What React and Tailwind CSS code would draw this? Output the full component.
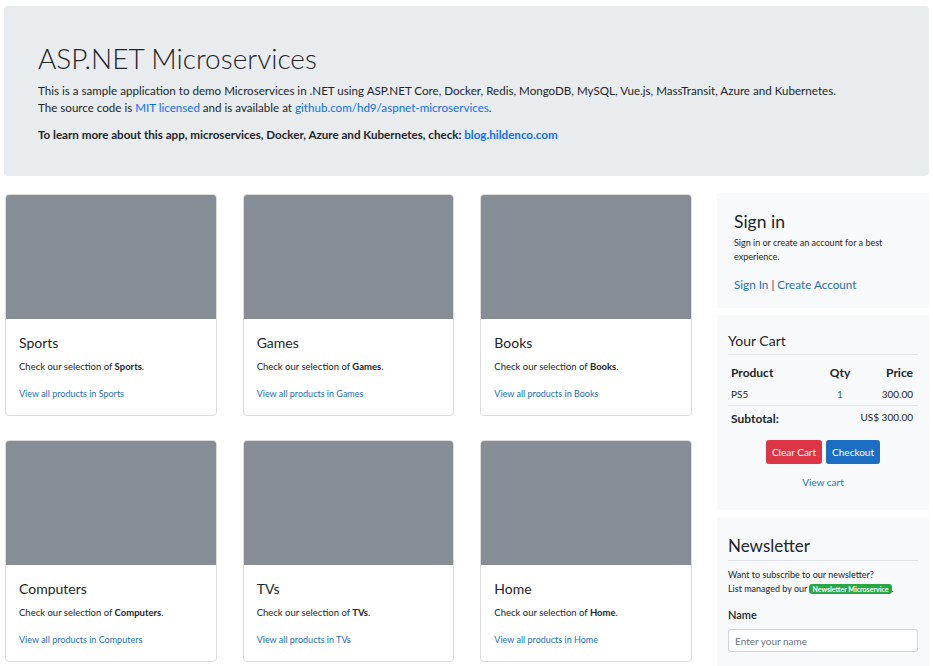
const categories = ['Sports', 'Games', 'Books', 'Computers', 'TVs', 'Home'];

function CategoryCard({ name }) {
  return (
    <div className="flex h-[222px] flex-col overflow-hidden rounded-[4px] border border-[#dcdcdc] bg-white">
      <div className="h-[124px] shrink-0 bg-[#878d94]" />
      <div className="px-[13px] pt-[14px]">
        <h5 className="text-[14px] leading-[20px] text-[#212529]">{name}</h5>
        <p className="mt-[7px] text-[9.5px] leading-[14px] text-[#212529]">
          Check our selection of <b>{name}</b>.
        </p>
        <a className="mt-[13px] block text-[9px] leading-[14px] text-[#1b6ec2]">View all products in {name}</a>
      </div>
    </div>
  );
}

export default function App() {
  return (
    <div className="min-h-[666px] bg-white px-[4px] pt-[6px] text-[#212529]" style={{ fontFamily: 'Lato, "Noto Sans", sans-serif' }}>
      <section className="rounded-[4px] bg-[#e9ecef] px-[34px] pb-[33px] pt-[34px]">
        <h1 className="text-[28px] font-light leading-[36px] text-[#212529]">ASP.NET Microservices</h1>
        <p className="mt-[6px] text-[11.6px] leading-[17px]">
          This is a sample application to demo Microservices in .NET using ASP.NET Core, Docker, Redis, MongoDB, MySQL, Vue.js, MassTransit, Azure and Kubernetes.
          <br />
          The source code is <a className="text-[#0d6efd]">MIT licensed</a> and is available at <a className="text-[#0d6efd]">github.com/hd9/aspnet-microservices</a>.
        </p>
        <p className="mt-[10px] text-[11.6px] font-bold leading-[17px]">
          To learn more about this app, microservices, Docker, Azure and Kubernetes, check: <a className="text-[#0d6efd]">blog.hildenco.com</a>
        </p>
      </section>

      <div className="mt-[17px] flex items-start">
        <div className="ml-[1px] grid w-[687px] grid-cols-3 gap-x-[26px] gap-y-[24px] pt-[1px]">
          {categories.map((c) => (
            <CategoryCard key={c} name={c} />
          ))}
        </div>

        <aside className="ml-[25px] flex w-[212px] flex-col gap-[7px]">
          <div className="h-[115px] bg-[#f8f9fa] px-[17px] pt-[16px]">
            <h4 className="text-[17.5px] leading-[26px]">Sign in</h4>
            <p className="mt-[1px] text-[9px] leading-[14px]">Sign in or create an account for a best experience.</p>
            <p className="mt-[12px] text-[11.7px] leading-[16px]">
              <a className="text-[#1b6ec2]">Sign In</a> <span className="text-[#6b2a3a]">|</span>{' '}
              <a className="text-[#1b6ec2]">Create Account</a>
            </p>
          </div>

          <div className="h-[195px] bg-[#f8f9fa] px-[11px] pt-[16px]">
            <h5 className="text-[14px] leading-[20px]">Your Cart</h5>
            <div className="mt-[3px] border-t border-[#dee2e6]" />
            <div className="grid grid-cols-[1fr_40px_53px] pl-[3px] pr-[5px] pt-[10px] text-[12px] font-bold leading-[16px]">
              <span>Product</span>
              <span className="text-center">Qty</span>
              <span className="text-right">Price</span>
            </div>
            <div className="grid grid-cols-[1fr_40px_53px] pl-[3px] pr-[5px] pt-[6px] pb-[4px] text-[10px] leading-[14px]">
              <span>PS5</span>
              <span className="text-center text-[#1b6ec2]">1</span>
              <span className="text-right">300.00</span>
            </div>
            <div className="border-t border-[#dee2e6]" />
            <div className="flex items-start justify-between pl-[3px] pr-[5px] pt-[4px]">
              <span className="text-[12px] font-bold leading-[18px]">Subtotal:</span>
              <span className="text-[10px] leading-[14px]">US$ 300.00</span>
            </div>
            <div className="mt-[12px] flex justify-center gap-[4px]">
              <button className="h-[24px] rounded-[3px] bg-[#dc3545] px-[6px] text-[10px] text-white">Clear Cart</button>
              <button className="h-[24px] rounded-[3px] bg-[#1b6ec2] px-[6px] text-[10px] text-white">Checkout</button>
            </div>
            <p className="mt-[11px] text-center text-[10px] leading-[14px]">
              <a className="text-[#1b6ec2]">View cart</a>
            </p>
          </div>

          <div className="h-[160px] bg-[#f8f9fa] px-[11px] pt-[17px]">
            <h4 className="text-[17px] leading-[24px]">Newsletter</h4>
            <div className="mt-[2px] border-t border-[#dee2e6]" />
            <p className="mt-[7px] text-[9px] leading-[14px]">
              Want to subscribe to our newsletter?
              <br />
              List managed by our{' '}
              <span className="rounded-[3px] bg-[#28a745] px-[3px] py-[1px] text-[7px] font-bold text-white">Newsletter Microservice</span>.
            </p>
            <label className="mt-[11px] block text-[11px] font-semibold leading-[16px]">Name</label>
            <input
              className="mt-[6px] h-[23px] w-full rounded-[3px] border border-[#ced4da] bg-white px-[6px] text-[10px] outline-none placeholder:text-[#6c757d]"
              placeholder="Enter your name"
            />
          </div>
        </aside>
      </div>
    </div>
  );
}
